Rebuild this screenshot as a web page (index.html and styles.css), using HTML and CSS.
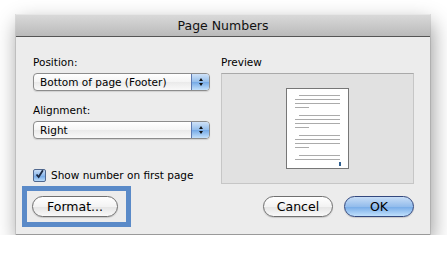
FILE: index.html
```html
<!DOCTYPE html>
<html lang="en">
<head>
<meta charset="utf-8">
<title>Page Numbers</title>
<link rel="stylesheet" href="styles.css">
</head>
<body>
<div class="window">
  <div class="titlebar">Page Numbers</div>
  <div class="content">
    <div class="main">
      <div class="left">
        <div class="label">Position:</div>
        <div class="popup">
          <span class="popup-text">Bottom of page (Footer)</span>
          <span class="stepper"><svg width="16" height="16" viewBox="0 0 16 16"><path d="M6 7 L8 4 L10 7 Z" fill="#111"/><path d="M6 9 L8 12 L10 9 Z" fill="#111"/></svg></span>
        </div>
        <div class="label label-gap">Alignment:</div>
        <div class="popup">
          <span class="popup-text">Right</span>
          <span class="stepper"><svg width="16" height="16" viewBox="0 0 16 16"><path d="M6 7 L8 4 L10 7 Z" fill="#111"/><path d="M6 9 L8 12 L10 9 Z" fill="#111"/></svg></span>
        </div>
        <div class="check-row">
          <span class="checkbox"><svg width="13" height="13" viewBox="0 0 13 13"><path d="M3 6.5 L5.5 9.5 L10.5 1.5" fill="none" stroke="#1b2a44" stroke-width="2.2"/></svg></span>
          <span class="check-text">Show number on first page</span>
        </div>
      </div>
      <div class="right">
        <div class="label">Preview</div>
        <div class="preview">
          <svg class="page" width="63" height="81" viewBox="0 0 63 81">
            <rect x="0.5" y="0.5" width="62" height="80" fill="#fff" stroke="#777"/>
            <g stroke="#ababab" stroke-width="1">
              <line x1="13" y1="7.5" x2="54" y2="7.5"/>
              <line x1="9" y1="11.5" x2="54" y2="11.5"/>
              <line x1="9" y1="15.5" x2="54" y2="15.5"/>
              <line x1="9" y1="19.5" x2="23" y2="19.5"/>
              <line x1="13" y1="27.5" x2="54" y2="27.5"/>
              <line x1="9" y1="31.5" x2="54" y2="31.5"/>
              <line x1="9" y1="35.5" x2="54" y2="35.5"/>
              <line x1="9" y1="39.5" x2="23" y2="39.5"/>
              <line x1="13" y1="47.5" x2="54" y2="47.5"/>
              <line x1="9" y1="51.5" x2="54" y2="51.5"/>
              <line x1="9" y1="55.5" x2="54" y2="55.5"/>
              <line x1="9" y1="59.5" x2="23" y2="59.5"/>
              <line x1="13" y1="67.5" x2="54" y2="67.5"/>
              <line x1="9" y1="71.5" x2="54" y2="71.5"/>
            </g>
            <rect x="53" y="74" width="2" height="4" fill="#2f5f8f"/>
          </svg>
        </div>
      </div>
    </div>
    <div class="buttons">
      <div class="format-wrap">
        <button class="btn btn-format">Format...</button>
        <span class="highlight"></span>
      </div>
      <div class="spacer"></div>
      <button class="btn btn-cancel">Cancel</button>
      <button class="btn btn-ok">OK</button>
    </div>
  </div>
</div>
</body>
</html>
```
FILE: styles.css
```css
html, body {
  margin: 0;
  padding: 0;
  background: #ffffff;
}
body {
  font-family: "DejaVu Sans", "Liberation Sans", sans-serif;
  font-size: 10.5px;
  color: #000;
}
.window {
  margin: 15px 0 0 16px;
  width: 414px;
  height: 220px;
  box-sizing: border-box;
  background: #ececec;
  border-bottom: 1px solid #9a9a9a;
  box-shadow: 2px 8px 20px rgba(0, 0, 0, 0.42), 0 0 0 1px rgba(0, 0, 0, 0.1);
  display: flex;
  flex-direction: column;
}
.titlebar {
  height: 21px;
  line-height: 21px;
  border-bottom: 1px solid #555;
  background: linear-gradient(#d9d9d9, #bababa);
  text-align: center;
  font-size: 12.5px;
  color: #111;
  border-top: 1px solid #e6e6e6;
  box-sizing: content-box;
  margin-top: -1px;
}
.content {
  padding: 18px 16px 0 17px;
}
.main {
  display: flex;
  gap: 11px;
}
.left {
  width: 177px;
  display: flex;
  flex-direction: column;
}
.right {
  width: 193px;
  display: flex;
  flex-direction: column;
}
.label {
  height: 14px;
  line-height: 14px;
  margin-bottom: 4px;
}
.label-gap {
  margin-top: 12px;
}
.popup {
  height: 18px;
  box-sizing: border-box;
  border: 1px solid #8c8c8c;
  border-radius: 4px;
  background: linear-gradient(#ffffff, #f4f4f4 50%, #eaeaea 51%, #f9f9f9);
  display: flex;
  align-items: center;
  box-shadow: 0 1px 1px rgba(0, 0, 0, 0.12);
  overflow: hidden;
}
.popup-text {
  flex: 1;
  padding-left: 6px;
  line-height: 16px;
}
.stepper {
  width: 17px;
  height: 16px;
  border-left: 1px solid #5f7ab0;
  background: linear-gradient(#cfe2f8, #93bdeb 50%, #74a9e6 51%, #c3e0fb);
  display: flex;
  align-items: center;
  justify-content: center;
}
.check-row {
  margin-top: 29px;
  height: 14px;
  display: flex;
  align-items: center;
  gap: 5px;
  line-height: 14px;
}
.checkbox {
  width: 13px;
  height: 13px;
  box-sizing: border-box;
  border: 1px solid #50688f;
  border-radius: 2px;
  background: linear-gradient(#c9def7, #8db8ea 50%, #6fa5e5 51%, #b9dbfa);
  display: flex;
  overflow: visible;
}
.checkbox svg {
  margin: -2px 0 0 0;
}
.preview {
  height: 111px;
  box-sizing: border-box;
  background: #e1e1e1;
  border: 1px solid #c6c6c6;
  border-top-color: #a9a9a9;
  display: flex;
  align-items: center;
  justify-content: center;
}
.page {
  display: block;
}
.buttons {
  margin-top: 12px;
  display: flex;
  align-items: center;
  gap: 11px;
}
.spacer {
  flex: 1;
}
.format-wrap {
  position: relative;
  margin-left: -1px;
  display: flex;
}
.btn {
  height: 21px;
  box-sizing: border-box;
  border: 1px solid #707070;
  border-radius: 11px;
  background: linear-gradient(#ffffff, #f3f3f3 50%, #e4e4e4 51%, #f9f9f9);
  font-family: "DejaVu Sans", "Liberation Sans", sans-serif;
  font-size: 12.5px;
  color: #000;
  padding: 0;
  line-height: 19px;
  text-align: center;
  box-shadow: 0 1px 1px rgba(0, 0, 0, 0.15);
}
.btn-format {
  width: 86px;
}
.btn-cancel {
  width: 70px;
}
.btn-ok {
  width: 70px;
  border-color: #33487e;
  background: linear-gradient(#c8ddf6, #94bdec 50%, #75aae7 51%, #c0e0fc);
}
.highlight {
  position: absolute;
  left: -10px;
  top: -10px;
  right: -13px;
  bottom: -10px;
  border: 5px solid #5a8ac8;
  pointer-events: none;
}
```
